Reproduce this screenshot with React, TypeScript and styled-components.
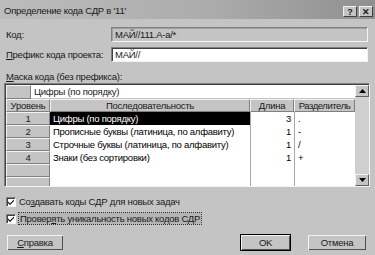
import React from 'react';
import styled, { createGlobalStyle } from 'styled-components';

const GlobalStyle = createGlobalStyle`
  html, body {
    margin: 0;
    padding: 0;
    background: #c4c4c4;
  }
  * {
    box-sizing: border-box;
  }
`;

const levels = [
  { n: 1, seq: 'Цифры (по порядку)', len: 3, sep: '.' },
  { n: 2, seq: 'Прописные буквы (латиница, по алфавиту)', len: 1, sep: '-' },
  { n: 3, seq: 'Строчные буквы (латиница, по алфавиту)', len: 1, sep: '/' },
  { n: 4, seq: 'Знаки (без сортировки)', len: 1, sep: '+' },
];

function CheckMark() {
  return (
    <svg width="8" height="8" viewBox="0 0 8 8">
      <path d="M1 3.5 L3 5.5 L7 1.5 L7 3 L3 7 L1 5 Z" fill="#000" />
    </svg>
  );
}

function Arrow({ up }) {
  return (
    <svg width="7" height="4" viewBox="0 0 7 4">
      {up ? <path d="M0 4 L3.5 0 L7 4 Z" fill="#000" /> : <path d="M0 0 L7 0 L3.5 4 Z" fill="#000" />}
    </svg>
  );
}

function TitleBar() {
  return (
    <Title>
      <span>Определение кода СДР в '11'</span>
      <CaptionButtons>
        <CaptionButton>?</CaptionButton>
        <CaptionButton>✕</CaptionButton>
      </CaptionButtons>
    </Title>
  );
}

function MaskGrid() {
  // две пустые строки внизу, как в оригинале
  const empty = [0, 1];
  return (
    <GridFrame>
      <GridBody>
        <EditRow>
          <HeadCell />
          <EditText>Цифры (по порядку)</EditText>
        </EditRow>
        <Row>
          <HeadCell>Уровень</HeadCell>
          <HeadCell>Последовательность</HeadCell>
          <HeadCell>Длина</HeadCell>
          <HeadCell tight>Разделитель</HeadCell>
        </Row>
        {levels.map((l) => (
          <Row key={l.n}>
            <HeadCell>{l.n}</HeadCell>
            <Cell selected={l.n === 1}>{l.seq}</Cell>
            <Cell align="right" line>{l.len}</Cell>
            <Cell line>{l.sep}</Cell>
          </Row>
        ))}
        {empty.map((i) => (
          <Row key={'e' + i}>
            <HeadCell />
            <Cell />
            <Cell line />
            <Cell line />
          </Row>
        ))}
      </GridBody>
      <ScrollBar>
        <ScrollButton><Arrow up /></ScrollButton>
        <ScrollTrack />
        <ScrollButton><Arrow /></ScrollButton>
      </ScrollBar>
    </GridFrame>
  );
}

export default function App() {
  return (
    <Window>
      <GlobalStyle />
      <TitleBar />
      <Body>
        <FieldRow>
          <Label>Код:</Label>
          <Field readOnly>МАЙ//111.A-a/*</Field>
        </FieldRow>
        <FieldRow>
          <Label><u>П</u>рефикс кода проекта:</Label>
          <Field>МАЙ//</Field>
        </FieldRow>
        <MaskLabel><u>М</u>аска кода (без префикса):</MaskLabel>
        <MaskGrid />
        <CheckRow first>
          <CheckBox><CheckMark /></CheckBox>
          <span>Со<u>з</u>давать коды СДР для новых задач</span>
        </CheckRow>
        <CheckRow>
          <CheckBox><CheckMark /></CheckBox>
          <FocusText>Провер<u>я</u>ть уникальность новых кодов СДР</FocusText>
        </CheckRow>
        <ButtonRow>
          <Button width={58}><u>С</u>правка</Button>
          <Spacer />
          <Button width={51} isDefault>OK</Button>
          <Button width={60}>Отмена</Button>
        </ButtonRow>
      </Body>
    </Window>
  );
}

const Window = styled.div`
  width: 375px;
  height: 255px;
  overflow: hidden;
  background: #c4c4c4;
  display: flex;
  flex-direction: column;
  font-family: "Liberation Sans", Arial, sans-serif;
  font-size: 9.5px;
  letter-spacing: -0.25px;
  color: #1a1a1a;
`;

const Title = styled.div`
  height: 19px;
  padding: 2px 2px 0 4px;
  display: flex;
  align-items: center;
  justify-content: space-between;
  background: linear-gradient(to right, #bcbcbc, #acacac 55%, #909090);
`;

const CaptionButtons = styled.div`
  display: flex;
  gap: 2px;
  margin-top: 2px;
`;

const CaptionButton = styled.div`
  width: 14px;
  height: 11px;
  background: #c4c4c4;
  border: 1px solid;
  border-color: #f0f0f0 #404040 #404040 #f0f0f0;
  display: flex;
  align-items: center;
  justify-content: center;
  font-weight: bold;
  font-size: 9px;
  letter-spacing: 0;
`;

const Body = styled.div`
  padding: 8px 5px 0 5px;
  display: flex;
  flex-direction: column;
`;

const FieldRow = styled.div`
  display: grid;
  grid-template-columns: 106px 1fr;
  align-items: center;
  margin-bottom: 5px;
  padding-right: 2px;
`;

const Label = styled.div`
  padding-left: 1px;
  white-space: nowrap;
`;

const Field = styled.div`
  height: 15px;
  display: flex;
  align-items: center;
  padding-left: 3px;
  background: ${(p) => (p.readOnly ? '#c4c4c4' : '#fff')};
  border: 1px solid;
  border-color: #808080 #f4f4f4 #f4f4f4 #808080;
  box-shadow: inset 1px 1px 0 ${(p) => (p.readOnly ? '#a0a0a0' : '#404040')};
`;

const MaskLabel = styled.div`
  margin-top: 4px;
  padding-left: 1px;
  height: 12px;
`;

const GridFrame = styled.div`
  height: 104px;
  width: 366px;
  margin-left: -1px;
  display: flex;
  background: #fff;
  border: 1px solid;
  border-color: #808080 #f4f4f4 #f4f4f4 #808080;
  box-shadow: inset 1px 1px 0 #404040;
  padding: 1px 0 0 1px;
  overflow: hidden;
`;

const GridBody = styled.div`
  flex: 1;
  display: flex;
  flex-direction: column;
`;

const EditRow = styled.div`
  display: grid;
  grid-template-columns: 25px 1fr;
  height: 14px;
  flex-shrink: 0;
`;

const EditText = styled.div`
  padding-left: 3px;
  display: flex;
  align-items: center;
  border-bottom: 1px solid #c4c4c4;
`;

const Row = styled.div`
  display: grid;
  grid-template-columns: 44px 200px 44px 1fr;
  height: 13px;
  flex-shrink: 0;
`;

const HeadCell = styled.div`
  background: #c4c4c4;
  border: 1px solid;
  border-color: #f4f4f4 #808080 #808080 #f4f4f4;
  display: flex;
  align-items: center;
  justify-content: center;
  white-space: nowrap;
  overflow: hidden;
  letter-spacing: ${(p) => (p.tight ? '-0.45px' : 'inherit')};
`;

const Cell = styled.div`
  display: flex;
  align-items: center;
  justify-content: ${(p) => (p.align === 'right' ? 'flex-end' : 'flex-start')};
  padding: 0 3px;
  white-space: nowrap;
  overflow: hidden;
  background: ${(p) => (p.selected ? '#000' : '#fff')};
  color: ${(p) => (p.selected ? '#fff' : '#000')};
  border-left: ${(p) => (p.line ? '1px solid #a8a8a8' : 'none')};
`;

const ScrollBar = styled.div`
  width: 14px;
  display: flex;
  flex-direction: column;
  background: #d8d8d8;
`;

const ScrollButton = styled.div`
  height: 12px;
  background: #c4c4c4;
  border: 1px solid;
  border-color: #f4f4f4 #606060 #606060 #f4f4f4;
  display: flex;
  align-items: center;
  justify-content: center;
`;

const ScrollTrack = styled.div`
  flex: 1;
  background: #d0d0d0;
`;

const CheckRow = styled.div`
  display: flex;
  align-items: center;
  gap: 3px;
  height: 15px;
  margin-top: ${(p) => (p.first ? '7px' : '2px')};
  padding-left: 1px;
`;

const CheckBox = styled.div`
  width: 10px;
  height: 10px;
  background: #fff;
  border: 1px solid;
  border-color: #808080 #f4f4f4 #f4f4f4 #808080;
  box-shadow: inset 1px 1px 0 #404040;
  display: flex;
  align-items: center;
  justify-content: center;
`;

const FocusText = styled.span`
  outline: 1px dotted #303030;
  background: #b4b4b4;
  padding: 0 1px;
`;

const ButtonRow = styled.div`
  display: flex;
  gap: 16px;
  margin-top: 8px;
  padding-left: 1px;
  padding-right: 3px;
`;

const Spacer = styled.div`
  flex: 1;
`;

const Button = styled.div`
  width: ${(p) => p.width}px;
  height: 17px;
  background: #c4c4c4;
  border: 1px solid ${(p) => (p.isDefault ? '#000' : 'transparent')};
  box-shadow: inset 1px 1px 0 #f4f4f4, inset -1px -1px 0 #505050;
  display: flex;
  align-items: center;
  justify-content: center;
`;
